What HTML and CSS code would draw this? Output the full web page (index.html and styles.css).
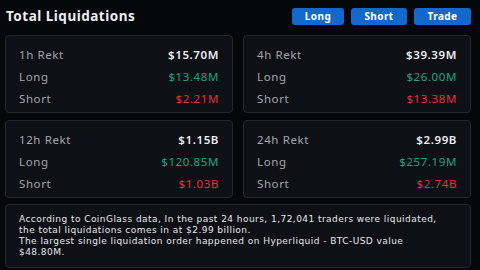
FILE: index.html
```html
<!DOCTYPE html>
<html lang="en">
<head>
    <meta charset="UTF-8">
    <meta name="viewport" content="width=device-width, initial-scale=1.0">
    <title>Total Liquidations</title>
    <link rel="stylesheet" href="styles.css">
</head>
<body>
    <!-- Cabeçalho -->
    <div class="header">
        <h1 class="title">Total Liquidations</h1>
        <div class="actions">
            <button class="btn">Long</button>
            <button class="btn">Short</button>
            <button class="btn">Trade</button>
        </div>
    </div>

    <!-- Cartões -->
    <div class="grid">
        <div class="card">
            <div class="row"><span class="label">1h Rekt</span><span class="value">$15.70M</span></div>
            <div class="row"><span class="label">Long</span><span class="value up">$13.48M</span></div>
            <div class="row"><span class="label">Short</span><span class="value down">$2.21M</span></div>
        </div>
        <div class="card">
            <div class="row"><span class="label">4h Rekt</span><span class="value">$39.39M</span></div>
            <div class="row"><span class="label">Long</span><span class="value up">$26.00M</span></div>
            <div class="row"><span class="label">Short</span><span class="value down">$13.38M</span></div>
        </div>
        <div class="card">
            <div class="row"><span class="label">12h Rekt</span><span class="value">$1.15B</span></div>
            <div class="row"><span class="label">Long</span><span class="value up">$120.85M</span></div>
            <div class="row"><span class="label">Short</span><span class="value down">$1.03B</span></div>
        </div>
        <div class="card">
            <div class="row"><span class="label">24h Rekt</span><span class="value">$2.99B</span></div>
            <div class="row"><span class="label">Long</span><span class="value up">$257.19M</span></div>
            <div class="row"><span class="label">Short</span><span class="value down">$2.74B</span></div>
        </div>
    </div>

    <div class="summary">
        According to CoinGlass data, In the past 24 hours, 1,72,041 traders were liquidated,<br>
        the total liquidations comes in at $2.99 billion.<br>
        The largest single liquidation order happened on Hyperliquid - BTC-USD value<br>
        $48.80M.
    </div>
</body>
</html>
```

FILE: styles.css
```css
* {
    margin: 0;
    padding: 0;
    box-sizing: border-box;
}
html, body {
    width: 100%;
    height: 100%;
    overflow: hidden;
    background-color: #06070b;
}
body {
    font-family: "Noto Sans", "DejaVu Sans", sans-serif;
    color: #e6e7ea;
    padding: 0 9px 0 5px;
}
.header {
    height: 35px;
    display: flex;
    justify-content: space-between;
    align-items: center;
    padding-bottom: 3px;
}
.title {
    font-size: 13.5px;
    font-weight: 700;
    letter-spacing: 0.5px;
    padding-left: 1px;
    color: #eceef1;
}
.actions {
    display: flex;
    gap: 7px;
}
.btn {
    font-family: inherit;
    border: none;
    border-radius: 3px;
    background-color: #1468c9;
    color: #fff;
    font-size: 10px;
    font-weight: 700;
    letter-spacing: 0.4px;
    height: 17px;
    width: 52px;
}
.btn + .btn {
    width: 56px;
}
.actions .btn:last-child {
    width: 57px;
}
.grid {
    display: grid;
    grid-template-columns: 1fr 1fr;
    column-gap: 10px;
    row-gap: 7px;
}
.card, .summary {
    background-color: #0e1016;
    border: 1px solid #24262c;
    border-radius: 4px;
}
.card {
    height: 78px;
    padding: 7px 13px 0 13px;
    display: flex;
    flex-direction: column;
}
.row {
    height: 22px;
    display: flex;
    justify-content: space-between;
    align-items: center;
    font-size: 11.5px;
    letter-spacing: 0.6px;
}
.label {
    color: #a3a6ac;
}
.value {
    color: #eceef1;
    font-weight: 600;
}
.value.up {
    color: #1fa47c;
    font-weight: 400;
}
.value.down {
    color: #e3323f;
    font-weight: 400;
}
.summary {
    margin-top: 6px;
    height: 64px;
    padding: 9px 13px;
    font-family: "DejaVu Sans", sans-serif;
    font-size: 9px;
    letter-spacing: 0.45px;
    line-height: 11px;
    color: #e6e7ea;
}
```
